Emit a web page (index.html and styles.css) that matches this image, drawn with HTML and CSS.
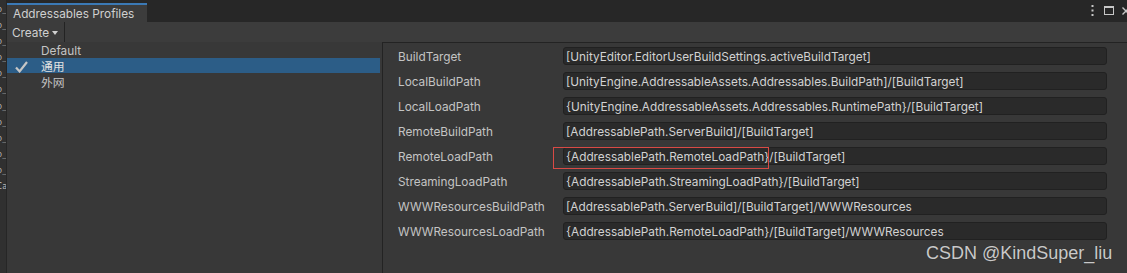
FILE: index.html
```html
<!DOCTYPE html>
<html>
<head>
<meta charset="utf-8">
<link rel="stylesheet" href="styles.css">
</head>
<body>
<div class="app">
  <div class="edge">
    <div class="frag"><span>o_</span></div>
    <div class="frag"><span>o_</span></div>
    <div class="frag"><span>o_</span></div>
    <div class="frag"><span>o_</span></div>
    <div class="frag"><span>o_</span></div>
    <div class="frag"><span>o_</span></div>
    <div class="frag"><span>o_</span></div>
    <div class="frag"><span>o_</span></div>
    <div class="frag"><span>o_</span></div>
    <div class="frag"><span>o_</span></div>
    <div class="frag"><span>o_</span></div>
    <div class="frag"><span>Ca</span></div>
  </div>
  <div class="window">
    <div class="tabbar">
      <div class="tab">Addressables Profiles</div>
      <div class="win-icons">
        <svg class="ico-dots" width="3" height="11" viewBox="0 0 3 11"><rect x="0.5" y="0" width="2" height="2" fill="#c8c8c8"/><rect x="0.5" y="4.5" width="2" height="2" fill="#c8c8c8"/><rect x="0.5" y="9" width="2" height="2" fill="#c8c8c8"/></svg>
        <svg class="ico-max" width="10" height="9" viewBox="0 0 10 9"><rect x="0.5" y="0.5" width="9" height="8" fill="none" stroke="#c8c8c8" stroke-width="1"/><rect x="0" y="0" width="10" height="2" fill="#c8c8c8"/></svg>
        <svg class="ico-close" width="8" height="8" viewBox="0 0 8 8"><path d="M0.5 0.5 L7.5 7.5 M7.5 0.5 L0.5 7.5" stroke="#c8c8c8" stroke-width="1.4" fill="none"/></svg>
      </div>
    </div>
    <div class="toolbar">
      <div class="create-btn">Create <span class="tri"></span></div>
    </div>
    <div class="main">
      <div class="list">
        <div class="item"><span class="check"></span><span class="name">Default</span></div>
        <div class="item selected"><span class="check"><svg width="13" height="12" viewBox="0 0 13 12"><path d="M1 6.5 L4.6 10.4 L12 1" fill="none" stroke="#c6c6c6" stroke-width="2.2"/></svg></span><span class="name">通用</span></div>
        <div class="item"><span class="check"></span><span class="name">外网</span></div>
      </div>
      <div class="detail">
        <div class="row"><div class="label">BuildTarget</div><div class="field">[UnityEditor.EditorUserBuildSettings.activeBuildTarget]</div></div>
        <div class="row"><div class="label">LocalBuildPath</div><div class="field">[UnityEngine.AddressableAssets.Addressables.BuildPath]/[BuildTarget]</div></div>
        <div class="row"><div class="label">LocalLoadPath</div><div class="field">{UnityEngine.AddressableAssets.Addressables.RuntimePath}/[BuildTarget]</div></div>
        <div class="row"><div class="label">RemoteBuildPath</div><div class="field">[AddressablePath.ServerBuild]/[BuildTarget]</div></div>
        <div class="row"><div class="label">RemoteLoadPath</div><div class="field marked">{AddressablePath.RemoteLoadPath}/[BuildTarget]<span class="highlight"></span></div></div>
        <div class="row"><div class="label">StreamingLoadPath</div><div class="field">{AddressablePath.StreamingLoadPath}/[BuildTarget]</div></div>
        <div class="row"><div class="label">WWWResourcesBuildPath</div><div class="field">[AddressablePath.ServerBuild]/[BuildTarget]/WWWResources</div></div>
        <div class="row"><div class="label">WWWResourcesLoadPath</div><div class="field">{AddressablePath.RemoteLoadPath}/[BuildTarget]/WWWResources</div></div>
      </div>
    </div>
  </div>
</div>
<div class="watermark">CSDN @KindSuper_liu</div>
</body>
</html>
```
FILE: styles.css
```css
html, body {
  margin: 0;
  padding: 0;
}
body {
  width: 1127px;
  height: 273px;
  overflow: hidden;
  background: #383838;
  font-family: Inter, "Noto Sans CJK SC", sans-serif;
  font-size: 11.8px;
  color: #c4c4c4;
  position: relative;
}
.app {
  display: flex;
  height: 273px;
}
.edge {
  width: 6px;
  border-right: 1px solid #262626;
  background: #303030;
  padding-top: 2px;
  display: flex;
  flex-direction: column;
  font-family: "DejaVu Sans Mono", monospace;
  font-size: 8px;
  color: #b8b8b8;
}
.frag {
  height: 16.1px;
  line-height: 16px;
  display: flex;
  justify-content: flex-end;
  overflow: hidden;
  white-space: nowrap;
}
.frag span {
  margin-right: -1px;
}
.window {
  flex: 1;
  display: flex;
  flex-direction: column;
  min-width: 0;
}
.tabbar {
  height: 22px;
  background: #272727;
  display: flex;
  align-items: flex-end;
}
.tab {
  width: 134px;
  height: 17px;
  padding: 0 0 0 6px;
  border-top: 2px solid #3b79b5;
  background: #3c3c3c;
  color: #d0d0d0;
  line-height: 18px;
  white-space: nowrap;
}
.win-icons {
  margin-left: auto;
  margin-right: -3px;
  align-self: stretch;
  display: flex;
  align-items: center;
  padding-bottom: 1px;
}
.ico-dots { margin-right: 10px; }
.ico-max { margin-right: 8px; }
.toolbar {
  height: 20px;
  background: #3c3c3c;
  display: flex;
}
.create-btn {
  width: 52px;
  padding-left: 5px;
  border-right: 1px solid #232323;
  line-height: 20px;
  padding-top: 1px;
  box-sizing: content-box;
  height: 19px;
  color: #d0d0d0;
  display: flex;
  align-items: center;
  gap: 2px;
}
.tri {
  width: 0;
  height: 0;
  border-left: 3.5px solid transparent;
  border-right: 3.5px solid transparent;
  border-top: 4px solid #d0d0d0;
  margin-left: 1px;
}
.main {
  flex: 1;
  display: flex;
  min-height: 0;
}
.list {
  width: 375px;
  display: flex;
  flex-direction: column;
}
.item {
  height: 16px;
  display: flex;
  align-items: center;
  margin-right: 2px;
}
.item.selected {
  background: #2c5d87;
  height: 15px;
  margin-bottom: 1px;
  color: #e2e2e2;
}
.check {
  width: 34px;
  display: flex;
  padding-left: 8px;
  box-sizing: border-box;
}
.check svg { display: block; margin-top: 2px; }
.name {
  line-height: 16px;
  padding-top: 2px;
}
.detail {
  flex: 1;
  border-left: 1px solid #232323;
  border-top: 1px solid #232323;
  padding: 4px 0 0 15px;
  display: flex;
  flex-direction: column;
  gap: 7px;
}
.row {
  height: 18px;
  display: flex;
  align-items: flex-start;
}
.label {
  width: 165px;
  color: #c4c4c4;
  line-height: 18px;
  padding-top: 1px;
  white-space: nowrap;
}
.field {
  width: 540px;
  height: 15px;
  line-height: 16px;
  padding: 1px 0 0 2px;
  background: #2a2a2a;
  border: 1px solid #212121;
  border-radius: 3px;
  color: #d2d2d2;
  white-space: nowrap;
  position: relative;
}
.highlight {
  position: absolute;
  left: -11px;
  top: -1px;
  width: 214px;
  height: 20px;
  border: 1px solid #d94a45;
}
.watermark {
  position: absolute;
  left: 926px;
  top: 243px;
  font-family: "Liberation Sans", Arial, sans-serif;
  font-size: 18px;
  line-height: 20px;
  color: #c9c9c9;
  text-shadow: 0 0 1px #2a2a2a;
  white-space: nowrap;
}
```
